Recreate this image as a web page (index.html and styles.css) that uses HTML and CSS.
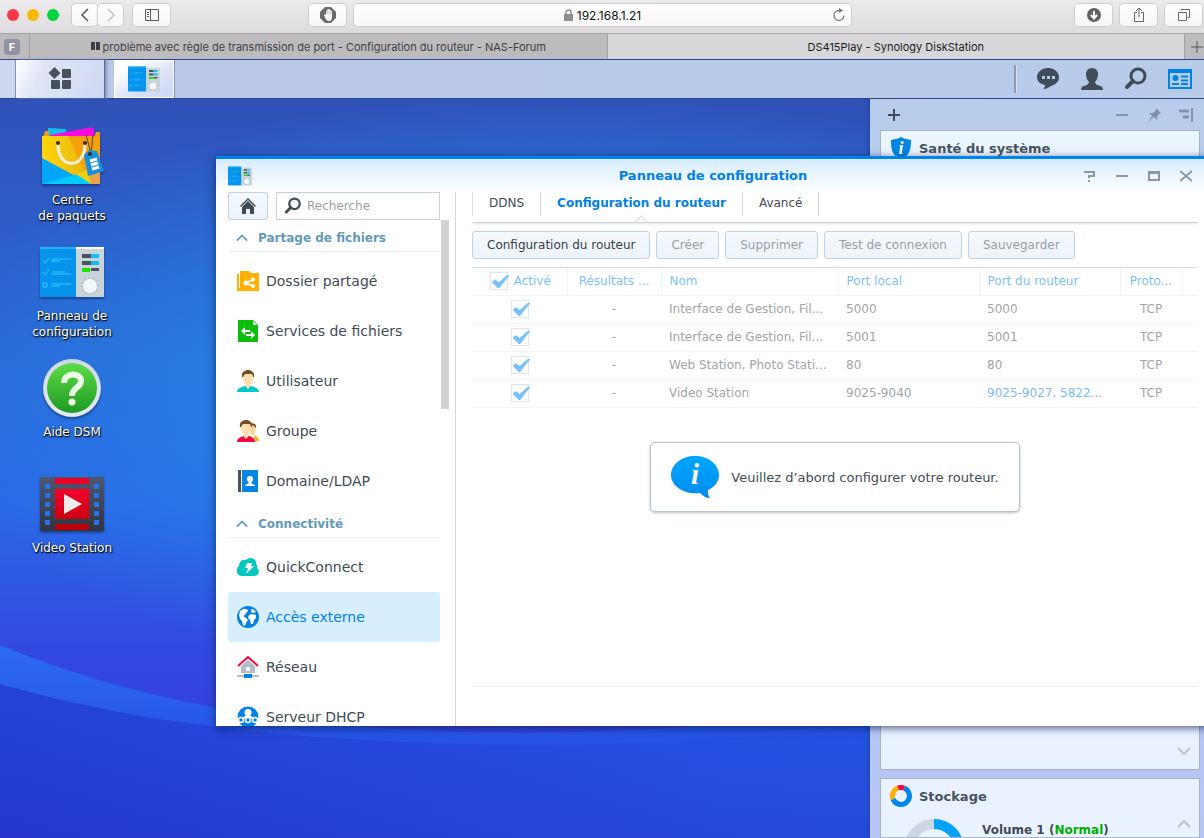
FILE: index.html
```
<!DOCTYPE html>
<html lang="fr">
<head>
	<meta charset="UTF-8">
	<title>DS415Play - Synology DiskStation</title>
<link rel="stylesheet" href="styles.css">
</head>
<body>
	<svg class="defs" width="0" height="0" aria-hidden="true">
		<defs>
			<linearGradient id="gGreen" x1="0" y1="0" x2="0" y2="1"><stop offset="0" stop-color="#5fdc46"/><stop offset="1" stop-color="#1c9a22"/></linearGradient>
			<linearGradient id="gRing" x1="0" y1="0" x2="0" y2="1"><stop offset="0" stop-color="#cdd8ea"/><stop offset="1" stop-color="#e6ebf3"/></linearGradient>
			<linearGradient id="gBag" x1="0" y1="0" x2="1" y2="0"><stop offset="0" stop-color="#ffd60a"/><stop offset="1" stop-color="#e2ad10"/></linearGradient>
			<linearGradient id="gFilm" x1="0" y1="0" x2="0" y2="1"><stop offset="0" stop-color="#4f5770"/><stop offset="1" stop-color="#2e343f"/></linearGradient>
			<linearGradient id="gRed" x1="0" y1="0" x2="0" y2="1"><stop offset="0" stop-color="#f5002c"/><stop offset="1" stop-color="#cc0010"/></linearGradient>
			<linearGradient id="gInfo" x1="0" y1="0" x2="0" y2="1"><stop offset="0" stop-color="#00a6ff"/><stop offset="1" stop-color="#008cf2"/></linearGradient>
			<linearGradient id="gSwirl" x1="0" y1="0" x2="0" y2="1"><stop offset="0" stop-color="#2c6cf0"/><stop offset=".45" stop-color="#2755e6"/><stop offset="1" stop-color="#2a36cc"/></linearGradient>
			<linearGradient id="gWave" x1="0" y1="0" x2="1" y2="0"><stop offset="0" stop-color="#2236cc"/><stop offset=".6" stop-color="#2450e0"/><stop offset="1" stop-color="#2458e4"/></linearGradient>
		</defs>
		<symbol id="panel" viewBox="0 0 64 50">
			<path d="M0 0h36v50H0z" fill="#0593ec"/>
			<path d="M0 0h36v2H0z" fill="#23b3ff"/>
			<path d="M36 0h28v50H36z" fill="#c9d4da"/>
			<path d="M36 0h28v2H36z" fill="#fff"/>
			<path d="M3 13l2 3 4-5M3 25l2 3 4-5M3 36h4v4H3z" fill="none" stroke="#35c7ff" stroke-width="1"/>
			<path d="M12 12h19M11 14h9M12 25h13M11 27h20M12 37h19M11 39h9" stroke="#35c7ff" stroke-width="1"/>
			<path d="M42 7h9v4h-9zM42 14h9v4h-9zM51 21h8v3h-8z" fill="#4a535b"/>
			<path d="M51 7h8v4h-8zM51 14h8v4h-8z" fill="#12bdf8"/>
			<path d="M42 21h8v4h-8z" fill="#1fe000"/>
			<circle cx="50" cy="39" r="8" fill="none" stroke="#a4b0b8" stroke-width="2" stroke-dasharray="1 3"/>
			<circle cx="50" cy="39" r="7" fill="#f1f8fb"/>
		</symbol>
		<symbol id="lens" viewBox="0 0 24 24">
			<circle cx="14" cy="9" r="7" fill="none" stroke="currentColor" stroke-width="3"/>
			<path d="M9 14l-6 6" stroke="currentColor" stroke-width="4" stroke-linecap="round"/>
		</symbol>
		<symbol id="up" viewBox="0 0 14 8"><path d="M1 7l6-6 6 6" fill="none" stroke="currentColor" stroke-width="2"/></symbol>
		<symbol id="down" viewBox="0 0 14 8"><path d="M1 1l6 6 6-6" fill="none" stroke="currentColor" stroke-width="2"/></symbol>
	</svg>

	<header class="safari">
		<div class="toolbar">
			<div class="lights"><i class="red"></i><i class="yellow"></i><i class="green"></i></div>
			<div class="nav">
				<button class="tb small" aria-label="Précédent"><svg width="12" height="14"><path d="M9 1L3 7l6 6" fill="none" stroke="#555" stroke-width="1.500"/></svg></button>
				<button class="tb small" aria-label="Suivant"><svg width="12" height="14"><path d="M3 1l6 6-6 6" fill="none" stroke="#c2c2c2" stroke-width="1.500"/></svg></button>
			</div>
			<button class="tb" aria-label="Barre latérale"><svg width="16" height="14"><path d="M1.500 1.500h13v11h-13zM6.500 1.500v11M3 4.500h2M3 6.500h2M3 8.500h2" fill="none" stroke="#5a5a5a"/></svg></button>
			<button class="tb block" aria-label="Bloqueur"><svg width="16" height="16"><path d="M5 0h6l5 5v6l-5 5H5l-5-5V5z" fill="#6a6a6a"/><path d="M4 8l1-1 1 1V4h1V2.500h1.500V2H10v1h1v1h1v6c0 2-1 4-3 4-2.500 0-4-3-5-6z" fill="#f5f5f5"/><path d="M7.500 4v3M9 4v3M10.500 4v3" stroke="#aaa" stroke-width=".5"/></svg></button>
			<div class="address">
				<svg width="9" height="12"><path d="M0 5h9v7H0z" fill="#8e8e8e"/><path d="M2 6V3.500a2.500 2.500 0 0 1 5 0V6" fill="none" stroke="#8e8e8e" stroke-width="1.500"/></svg>
				<span>192.168.1.21</span>
				<button class="reload" aria-label="Actualiser"><svg width="14" height="14"><path d="M8 2.500a5 5 0 1 0 4 5" fill="none" stroke="#777" stroke-width="1.200"/><path d="M7 0l4 2.500L7 5z" fill="#777"/></svg></button>
			</div>
			<div class="tools">
				<button class="tb" aria-label="Téléchargements"><svg width="14" height="14"><circle cx="7" cy="7" r="7" fill="#636363"/><path d="M7 3v7M4 7l3 3.500L10 7" fill="none" stroke="#fff" stroke-width="2"/></svg></button>
				<button class="tb" aria-label="Partager"><svg width="12" height="16"><path d="M4 5.500H1.500v9h9v-9H8M6 10V1.500M3 4l3-3 3 3" fill="none" stroke="#666"/></svg></button>
				<button class="tb" aria-label="Onglets"><svg width="14" height="14"><path d="M1.500 4.500h8v8h-8zM4 2.500V1.500h8.500v8h-2" fill="none" stroke="#666"/></svg></button>
			</div>
		</div>
		<nav class="tabs">
			<a class="pinned" href="#"><b>F</b></a>
			<a class="tab" href="#"><svg width="9" height="9"><path d="M0 0h4v8H0zM5 0h4v8H5z" fill="#3f3f43"/></svg>problème avec règle de transmission de port - Configuration du routeur - NAS-Forum</a>
			<a class="tab current" href="#">DS415Play - Synology DiskStation</a>
			<button class="newtab" aria-label="Nouvel onglet"><svg width="12" height="12"><path d="M6 0v12M0 6h12" stroke="#555"/></svg></button>
		</nav>
	</header>

	<div class="taskbar">
		<button class="mainmenu" aria-label="Menu principal"><svg width="24" height="24" fill="#46525c"><path d="M6.500 0l6 6-6 6-6-6z"/><rect x="14" y="2" width="9" height="9" rx="1"/><rect x="3" y="13" width="9" height="9" rx="1"/><rect x="14" y="13" width="9" height="9" rx="1"/></svg></button>
		<button class="running" aria-label="Panneau de configuration"><svg width="32" height="26"><use href="#panel"/></svg></button>
		<div class="tray">
			<button aria-label="Notifications"><svg width="24" height="24"><path d="M12 1c6 0 11 4 11 9s-4 8-8 9c-2 1-4 3-8 3 1-1 2-2 2-4-5-1-8-4-8-8 0-5 5-9 11-9z" fill="#414c59"/><path d="M6 9h3v3H6zM11 9h3v3h-3zM16 9h3v3h-3z" fill="#b9c8ea"/></svg></button>
			<button aria-label="Options"><svg width="24" height="24"><path d="M12 1c4 0 6 3 6 6s-1 6-3 8c0 2 2 3 5 4 2 0 3 2 3 4H1c0-2 1-4 3-4 3-1 5-2 5-4-2-2-3-5-3-8s2-6 6-6z" fill="#414c59"/></svg></button>
			<button aria-label="Rechercher"><svg width="24" height="24"><use href="#lens"/></svg></button>
			<button class="on" aria-label="Widgets"><svg width="24" height="20"><path d="M1 2h22v17H1z" fill="none" stroke="#0083e6" stroke-width="2"/><path d="M0 0h24v4H0z" fill="#0083e6"/><circle cx="7.500" cy="9" r="3" fill="#0083e6"/><path d="M4 15h7M13 7.500h7M13 11.500h7M13 15h7" stroke="#0083e6" stroke-width="2"/></svg></button>
		</div>
	</div>

	<main class="desktop">
		<svg class="wallpaper" viewBox="0 0 1204 740" preserveAspectRatio="none" aria-hidden="true">
			<path d="M0 547C120 596 260 628 470 634S900 610 1204 560V740H0z" fill="url(#gSwirl)"/>
			<path d="M0 586c150 42 300 56 480 60 250 6 520-30 724-60v154H0z" fill="url(#gWave)" opacity=".7"/>
		</svg>

		<ul class="icons">
			<li><a href="#"><span class="pic"><svg width="64" height="64" viewBox="0 0 64 64">
				<path d="M8 4l18 1 2 12H7z" fill="#14bdf0"/><path d="M5 7h4v6H3zM56 8h4v6h-6z" fill="#e0a11b"/><path d="M10 11l43-8 2 10H10z" fill="#f80ae0"/>
				<path d="M2 12h58v48H2z" fill="url(#gBag)"/><path d="M28 12h32v48h-10z" fill="#f5a00c"/><path d="M2 34l48 26H2z" fill="#02a6fa"/><path d="M50 59L38 50 2 60h48z" fill="#04ccff"/><path d="M36 50l12-5 3 15z" fill="#f0ce16"/><path d="M50 44h10v16h-9z" fill="#e8a34e"/>
				<path d="M18 20c0 26 27 26 27 0" fill="none" stroke="#fbeee2" stroke-width="3"/><circle cx="18" cy="19" r="2" fill="#402a10"/><circle cx="45" cy="19" r="2" fill="#402a10"/>
				<path d="M46 11l5 18 2-18" fill="none" stroke="#5b4310"/><path d="M44 31l5-5 8 1 7 20-16 5z" fill="#1592dd"/><path d="M50 37l7-2M51 41l7-2M52 45l7-2" stroke="#fff" stroke-width="3"/><circle cx="50" cy="30" r="2" fill="#39310f"/>
			</svg></span>Centre <br>de paquets</a></li>
			<li><a href="#"><span class="pic"><svg width="64" height="50"><use href="#panel"/></svg></span>Panneau de configuration</a></li>
			<li><a href="#"><span class="pic"><svg width="60" height="60"><circle cx="30" cy="30" r="29" fill="url(#gRing)"/><circle cx="30" cy="30" r="25" fill="url(#gGreen)"/><path d="M22 25c0-11 17-11 17-2 0 7-9 6-9 15" fill="none" stroke="#eaffe6" stroke-width="6"/><circle cx="30" cy="44" r="3.500" fill="#eaffe6"/></svg></span>Aide DSM</a></li>
			<li><a href="#"><span class="pic"><svg width="64" height="54"><rect width="64" height="54" rx="1" fill="url(#gFilm)"/><path d="M15 1h34v6H15z" fill="#e8002a"/><path d="M15 12h34v30H15z" fill="url(#gRed)"/><path d="M15 47h34v6H15z" fill="#b80008"/><path d="M24 17v20l18-10z" fill="#f0eaec"/><path d="M7.500 7v41M56.500 7v41" stroke="#2a72ea" stroke-width="5" stroke-dasharray="5 4"/></svg></span>Video Station</a></li>
		</ul>

		<aside class="widgets">
			<div class="widgetbar">
				<button aria-label="Ajouter"><svg width="12" height="12"><path d="M6 0v12M0 6h12" stroke="#414c59" stroke-width="2"/></svg></button>
				<span class="fill"></span>
				<button aria-label="Réduire"><svg width="14" height="14"><path d="M1 7h12" stroke="#8493ad" stroke-width="2"/></svg></button>
				<button aria-label="Épingler"><svg width="14" height="14"><path d="M9 0l5 5-2 1-2 3 0 3-3-3-6 5 4-6-3-3h4l3-3z" fill="#8493ad"/></svg></button>
				<button aria-label="Ancrer"><svg width="14" height="14"><path d="M0 3h10M4 9h6" stroke="#8493ad" stroke-width="3"/><path d="M13 0v14" stroke="#8493ad" stroke-width="2"/></svg></button>
			</div>
			<section class="widget health">
				<h3><svg width="22" height="24"><path d="M11 1c3 2 7 2 10 3 0 9-1 16-10 19C2 20 1 13 1 4c3-1 7-1 10-3z" fill="#0086e6"/><text class="info" x="11" y="18" text-anchor="middle" font-size="18">i</text></svg>Santé du système</h3>
				<svg class="arrow" width="14" height="8"><use href="#down"/></svg>
			</section>
			<section class="widget storage">
				<h3><svg width="22" height="22" fill="none" stroke-width="5"><path d="M14 3a8.500 8.500 0 1 1-11 11" stroke="#0086e6"/><path d="M3 14a8.500 8.500 0 0 1 5-11" stroke="#ffb000"/><path d="M8 3a9 9 0 0 1 6 0" stroke="#f8063f"/></svg>Stockage</h3>
				<div class="volume">
					<svg class="donut" width="60" height="60" fill="none" stroke-width="10"><circle cx="30" cy="30" r="25" stroke="#cdd7e1"/><path d="M30 5a25 25 0 0 1 0 50" stroke="#02a2fb"/></svg>
					<p>Volume 1 (<em>Normal</em>)</p>
					<svg class="arrow" width="14" height="8"><use href="#up"/></svg>
				</div>
			</section>
		</aside>

		<div class="window">
			<div class="titlebar">
				<svg class="appicon" width="24" height="20"><use href="#panel"/></svg>
				<h1>Panneau de configuration</h1>
				<div class="controls">
					<button aria-label="Aide"><svg width="12" height="12"><path d="M0 2h10v4H5v2M4 11h2" fill="none" stroke="#8c979f" stroke-width="2"/></svg></button>
					<button aria-label="Réduire"><svg width="12" height="12"><path d="M0 6h12" stroke="#8c979f" stroke-width="2"/></svg></button>
					<button aria-label="Agrandir"><svg width="12" height="12"><path d="M1 2h10v8H1z" fill="none" stroke="#8c979f" stroke-width="2"/><path d="M0 3h12" stroke="#8c979f" stroke-width="2"/></svg></button>
					<button aria-label="Fermer"><svg width="12" height="12"><path d="M0 1l12 10M12 1L0 11" stroke="#8c979f" stroke-width="2"/></svg></button>
				</div>
			</div>
			<div class="content">
				<div class="sidebar">
					<div class="find">
						<button class="btn home" aria-label="Accueil"><svg width="16" height="16"><path d="M0 8l8-8 8 8-1 1-7-7-7 7z" fill="#414c59"/><path d="M2 9l6-6 6 6v7h-4v-5H6v5H2z" fill="#414c59"/></svg></button>
						<label class="search"><svg width="18" height="18"><use href="#lens"/></svg><input type="text" placeholder="Recherche" aria-label="Recherche"></label>
					</div>
					<div class="list">
						<h2><svg width="12" height="8" viewBox="0 0 14 8"><use href="#up"/></svg>Partage de fichiers</h2>
						<ul>
							<li><a href="#"><svg width="22" height="22"><path d="M0 4h2v17H0zM3 1h9l1 2h9v18H3z" fill="#ffb000"/><path d="M0 18h5v3H0z" fill="#ffb000"/><circle cx="9" cy="13" r="2.500" fill="#fff"/><circle cx="16" cy="9.500" r="2" fill="#fff"/><circle cx="16" cy="16" r="2" fill="#fff"/><path d="M16 9.500L9 13l7 3" fill="none" stroke="#fff" stroke-width="1.500"/></svg>Dossier partagé</a></li>
							<li><a href="#"><svg width="22" height="22"><path d="M1 0h15l5 5v17H1z" fill="#0cbe0c"/><path d="M16 1v4h4z" fill="#fff"/><path d="M4 11l4-4v3h5v2H8v3zM18 15l-4-4v3H9v2h5v3z" fill="#fff"/></svg>Services de fichiers</a></li>
							<li><a href="#"><svg width="22" height="22"><path d="M0 22c0-4 5-5 8-6h6c3 1 8 2 8 6z" fill="#00c8c8"/><path d="M11 2c4 0 5 3 5 6s-2 6-3 7v2l-2 2-2-2v-2c-1-1-3-4-3-7s1-6 5-6z" fill="#ffdfb0"/><path d="M5 7c-1-5 3-7 6-7s7 2 6 7h-1l-1-3H8L6 7z" fill="#7a4a22"/></svg>Utilisateur</a></li>
							<li><a href="#"><svg width="22" height="22"><path d="M17 15c3 1 5 3 5 6h-4z" fill="#ffb000"/><path d="M14 5h5c0 5-1 7-2 10h-4z" fill="#ffd49a"/><path d="M13 4c3-2 7 0 6 4l-2-2z" fill="#7a4a22"/><path d="M0 22c0-4 4-5 7-6h5c3 1 6 2 6 6z" fill="#f8063f"/><path d="M9 2c4 0 5 3 5 6s-2 6-3 7v2l-2 2-2-2v-2c-1-1-3-4-3-7s1-6 5-6z" fill="#ffdfb0"/><path d="M3 7C2 2 6 0 9 0s7 2 6 7h-1l-1-3H6L4 7z" fill="#7a4a22"/></svg>Groupe</a></li>
							<li><a href="#"><svg width="22" height="22"><path d="M1 0h3v22H1z" fill="#46525c"/><path d="M5 0h16v22H5z" fill="#0086e6"/><path d="M13 6c2 0 3 1 3 3s-1 3-2 4c0 1 4 1 4 3H8c0-2 4-2 4-3-1-1-2-2-2-4s1-3 3-3z" fill="#fff"/></svg>Domaine/LDAP</a></li>
						</ul>
						<h2><svg width="12" height="8" viewBox="0 0 14 8"><use href="#up"/></svg>Connectivité</h2>
						<ul>
							<li><a href="#"><svg width="22" height="22"><path d="M5 20c-7 0-6-9-3-10 0-5 4-7 7-6 3-4 11-2 10 4 1 1 2 2 1 4 4 3 1 8-3 8z" fill="#00c8c0"/><path d="M10 7h5l-1 3h3l-8 8 2-6H8z" fill="#fff"/></svg>QuickConnect</a></li>
							<li class="selected"><a href="#"><svg width="22" height="22"><circle cx="11" cy="11" r="11" fill="#0083e6"/><path d="M3 5l3-2 4 0 1 2-2 2-1 2-2 1 3 2 2 2-2 3-1 3-2-1-1-4-2-2-1-4z" fill="#fff"/><path d="M12 9l3-1 4 1 0 3-2 2-1 4-2 0-1-4-2-2zM14 4l2-1 3 3-3 1-2-1z" fill="#fff"/></svg>Accès externe</a></li>
							<li><a href="#"><svg width="22" height="22"><path d="M1 10l10-9 10 9" fill="none" stroke="#f8063f" stroke-width="2"/><path d="M4 10l7-6 7 6v7H4z" fill="#b1bcc7"/><path d="M9 11h4v4H9z" fill="#fff"/><path d="M0 20h22" stroke="#b1bcc7" stroke-width="2"/><path d="M7 18h8v4H7z" fill="#0083e6"/></svg>Réseau</a></li>
							<li><a href="#"><svg width="22" height="22"><circle cx="11" cy="11" r="10.500" fill="#0083e6"/><circle cx="11" cy="6.500" r="3.500" fill="#fff"/><path d="M11 8v5M11 9l-6 4M11 9l6 4" stroke="#fff" stroke-width="2"/><g fill="#0083e6" stroke="#fff" stroke-width="1.500"><circle cx="4" cy="14" r="2.500"/><circle cx="11" cy="14" r="2.500"/><circle cx="18" cy="14" r="2.500"/></g></svg>Serveur DHCP</a></li>
						</ul>
					</div>
				</div>
				<div class="scroll"><i></i></div>
				<div class="main">
					<nav class="subtabs">
						<a href="#">DDNS</a>
						<a class="active" href="#">Configuration du routeur</a>
						<a href="#">Avancé</a>
					</nav>
					<div class="actions">
						<button class="btn">Configuration du routeur</button>
						<button class="btn" disabled>Créer</button>
						<button class="btn" disabled>Supprimer</button>
						<button class="btn" disabled>Test de connexion</button>
						<button class="btn" disabled>Sauvegarder</button>
					</div>
					<div class="grid">
						<table>
							<colgroup><col class="c1"><col class="c2"><col class="c3"><col class="c4"><col class="c4"><col class="c5"><col></colgroup>
							<thead>
								<tr><th class="mid"><label><input type="checkbox" checked>Activé</label></th><th class="mid">Résultats ...</th><th>Nom</th><th>Port local</th><th>Port du routeur</th><th class="mid">Proto...</th><th></th></tr>
							</thead>
							<tbody>
								<tr><td class="mid"><input type="checkbox" checked aria-label="Activé"></td><td class="mid">-</td><td>Interface de Gestion, Fil...</td><td>5000</td><td>5000</td><td class="mid">TCP</td><td></td></tr>
								<tr><td class="mid"><input type="checkbox" checked aria-label="Activé"></td><td class="mid">-</td><td>Interface de Gestion, Fil...</td><td>5001</td><td>5001</td><td class="mid">TCP</td><td></td></tr>
								<tr><td class="mid"><input type="checkbox" checked aria-label="Activé"></td><td class="mid">-</td><td>Web Station, Photo Stati...</td><td>80</td><td>80</td><td class="mid">TCP</td><td></td></tr>
								<tr><td class="mid"><input type="checkbox" checked aria-label="Activé"></td><td class="mid">-</td><td>Video Station</td><td>9025-9040</td><td><a href="#">9025-9027, 5822</a>...</td><td class="mid">TCP</td><td></td></tr>
							</tbody>
						</table>
						<div class="mask">
							<div class="message">
								<svg width="48" height="42"><path d="M24 0c13 0 24 8 24 19 0 6-4 12-11 15 0 3 0 6 2 8-4 0-7-2-10-5C13 39 0 30 0 19 0 8 11 0 24 0z" fill="url(#gInfo)"/><text class="info" x="24" y="28" text-anchor="middle" font-size="29">i</text></svg>
								<p>Veuillez d’abord configurer votre routeur.</p>
							</div>
						</div>
					</div>
				</div>
			</div>
		</div>
	</main>
</body>
</html>
```
FILE: styles.css
```
*{margin: 0;padding: 0;box-sizing: border-box;}
body{height: 100vh;display: flex;flex-direction: column;overflow: hidden;font-family: Verdana, "DejaVu Sans", sans-serif;font-size: 12px;color: #414b55;background: #2d5fe0;}
ul{list-style: none;}
a{color: inherit;text-decoration: none;}
button{border: none;background: none;font: inherit;color: inherit;}
svg{display: block;flex: none;}
.defs{position: absolute;}
.info{fill: #fff;font-family: "Liberation Serif", serif;font-weight: bold;font-style: italic;}

/* safari */
.safari{font-family: Inter, sans-serif;color: #111;}
.toolbar{height: 33px;padding: 4px 2px 7px 7px;display: flex;background: linear-gradient(#edebed, #dddbdd);}
.lights{display: flex;gap: 8px;padding-top: 5px;width: 65px;}
.lights i{width: 12px;height: 12px;border-radius: 50%;}
.red{background: #fc3846;}
.yellow{background: #fdb900;}
.green{background: #02d43f;}
.nav{display: flex;gap: 1px;margin-right: 10px;}
.tb{width: 37px;height: 22px;display: flex;align-items: center;justify-content: center;border-radius: 4px;background: linear-gradient(#fff, #f6f6f6);box-shadow: 0 0 1px 1px #cfcdcf;}
.small{width: 25px;}
.block{margin-left: 139px;}
.address{flex: 1;margin-left: 8px;height: 22px;display: flex;align-items: center;justify-content: center;gap: 4px;position: relative;border-radius: 4px;background: linear-gradient(#fff, #f7f7f7);box-shadow: 0 0 1px 1px #cfcdcf;font-size: 12px;}
.reload{position: absolute;right: 5px;top: 4px;}
.tools{display: flex;gap: 8px;margin-left: 224px;}
.tabs{height: 26px;display: flex;border-top: 1px solid #a5a3a6;background: #bdbbbe;font-size: 11px;}
.pinned{width: 30px;padding-left: 4px;display: flex;align-items: center;border-right: 1px solid #a3a1a4;}
.pinned b{width: 16px;height: 16px;line-height: 16px;border-radius: 4px;text-align: center;background: #9192a3;color: #fff;}
.tab{flex: 1;display: flex;align-items: center;justify-content: center;gap: 3px;border-right: 1px solid #a3a1a4;color: #3f3f43;}
.current{background: #d8d6d8;color: #1c1c1e;}
.newtab{width: 19px;padding-left: 6px;}

/* taskbar */
.taskbar{height: 40px;flex: none;display: flex;border-top: 1px solid #27468c;border-bottom: 1px solid #27468c;background: linear-gradient(90deg, #bac7ea, #b8cbe9);}
.mainmenu{width: 90px;margin: 0 9px 0 15px;border-left: 1px solid #8594b2;border-right: 1px solid #5b6786;background: linear-gradient(115deg, #fff, #dfe4f6 30%, #cfd8f3);box-shadow: 2px 0 3px #8592b8, -15px 0 #cdd7f0;display: flex;align-items: center;justify-content: center;}
.running{width: 61px;border-right: 1px solid #8594b2;background: linear-gradient(150deg, #fff 20%, #dbe2f7 60%, #cdd6f3);box-shadow: inset 0 0 0 1px #fff;display: flex;align-items: center;justify-content: center;}
.tray{display: flex;margin-left: auto;padding-right: 2px;align-items: center;color: #414c59;}
.tray::before{content: "";height: 28px;width: 2px;background: #8c9ab5;border-right: 1px solid #d5dff2;margin-right: 9px;}
.tray button{width: 44px;height: 38px;display: flex;align-items: center;justify-content: center;}

/* desktop */
.desktop{flex: 1;position: relative;overflow: hidden;display: flex;justify-content: space-between;background: radial-gradient(ellipse 640px 300px at 560px 290px, #2090ea, rgba(32,130,232,0)), linear-gradient(#3051b8 0, #2b68d8 35%, #2b68e6 55%, #3348e0 75%, #3538da);}
.wallpaper{position: absolute;top: 0;left: 0;width: 100%;height: 100%;}
.icons{position: relative;width: 120px;margin-left: 12px;padding-top: 25px;}
.icons li{height: 116px;}
.icons a{display: block;line-height: 16px;text-align: center;color: #fff;text-shadow: 1px 1px 1px #000, 0 1px 2px #123;}
.pic{height: 64px;margin-bottom: 4px;display: flex;align-items: center;justify-content: center;filter: drop-shadow(0 2px 1px rgba(10,30,80,.5));}

/* widgets */
.widgets{position: relative;width: 334px;padding: 0 4px 0 10px;display: flex;flex-direction: column;background: linear-gradient(#b8cdeb, #b7c6f6);box-shadow: 0 0 5px #1c3f90;}
.widgetbar{height: 31px;padding: 0 7px 0 8px;display: flex;align-items: center;gap: 18px;}
.fill{flex: 1;}
.widget{border: 1px solid #a9b5c6;padding: 6px 8px 0 9px;}
.widget h3{display: flex;align-items: center;gap: 7px;height: 22px;font-size: 13px;color: #46525e;}
.health{flex: 1;margin-bottom: 8px;display: flex;flex-direction: column;justify-content: space-between;align-items: stretch;background: linear-gradient(#eaf5fd, #ebf2ff);}
.health .arrow{align-self: flex-end;margin-bottom: 14px;}
.arrow{color: #bac2cf;}
.storage{height: 60px;overflow: hidden;background: #ebf2ff;}
.volume{display: flex;padding: 12px 0 0 14px;font-weight: bold;line-height: 22px;}
.volume p{flex: 1;margin-left: 18px;}
.volume em{font-style: normal;color: #00ae00;}
.volume .arrow{margin-top: 1px;}

/* window */
.window{position: absolute;top: 57px;left: 216px;right: -4px;bottom: 112px;display: flex;flex-direction: column;border-top: 3px solid #0083ea;background: #fff;box-shadow: 0 2px 8px rgba(10,25,80,.7);}
.titlebar{height: 33px;padding: 0 16px 0 12px;display: flex;align-items: center;justify-content: space-between;background: linear-gradient(#d6ecfc, #fff);}
.titlebar h1{flex: 1;text-align: center;font-size: 13px;color: #0080ea;padding-left: 90px;}
.controls{display: flex;gap: 20px;}
.content{flex: 1;min-height: 0;display: flex;padding-left: 12px;}
.sidebar{width: 212px;display: flex;flex-direction: column;overflow: hidden;}
.find{display: flex;gap: 8px;flex: none;}
.btn{height: 28px;padding: 0 14px;border: 1px solid #c3d0dd;border-radius: 3px;background: linear-gradient(#f5f9fd, #edf3fa);color: #35404a;}
.btn:disabled{color: #96a0aa;}
.home{width: 40px;padding: 0 11px;}
.search{flex: 1;display: flex;align-items: center;gap: 5px;height: 28px;padding: 0 7px;border: 1px solid #c3d0dd;color: #414c59;}
.search input{width: 110px;border: none;outline: none;font: inherit;color: #414b55;}
.search input::placeholder{color: #98a2ac;}
.list h2{height: 32px;padding: 4px 0 0 8px;display: flex;align-items: center;gap: 10px;border-bottom: 1px solid #e6edf3;margin-bottom: 4px;font-size: 12px;color: #6499b8;}
.list a{height: 50px;padding-left: 9px;display: flex;align-items: center;gap: 7px;font-size: 14px;}
.list .selected a{background: #d6eefe;border-radius: 3px;color: #0080ea;}
.scroll{width: 16px;padding: 28px 0 0 1px;border-right: 1px solid #d4d7da;}
.scroll i{display: block;width: 8px;height: 189px;background: #d0d2d4;}

.main{flex: 1;min-width: 0;display: flex;flex-direction: column;padding: 0 10px 39px 16px;}
.subtabs{display: flex;height: 31px;padding-bottom: 6px;border-bottom: 1px solid #d0d4d8;box-shadow: 0 2px 2px -1px #e2e4e6;flex: none;}
.subtabs a{position: relative;padding: 0 16px;line-height: 22px;border-right: 1px solid #d4dfe8;}
.subtabs a:first-child{border-left: 1px solid #d4dfe8;}
.subtabs .active{color: #0080ea;font-weight: bold;}
.active::after{content: "";position: absolute;left: 50%;bottom: -11px;width: 9px;height: 9px;margin-left: -5px;background: #fff;border: solid #d0d4d8;border-width: 1px 0 0 1px;transform: rotate(45deg);clip-path: polygon(0 0, 100% 0, 0 100%);}
.actions{display: flex;gap: 6px;margin: 8px 0;position: relative;}
.grid{flex: 1;position: relative;border-top: 1px solid #d4dfe8;border-bottom: 1px solid #e6edf3;}
table{width: 100%;table-layout: fixed;border-collapse: collapse;color: #a0a5aa;}
.c1{width: 95px;}
.c2{width: 94px;}
.c3{width: 177px;}
.c4{width: 141px;}
.c5{width: 62px;}
th, td{height: 28px;padding: 0 0 0 8px;text-align: left;font-weight: normal;white-space: nowrap;border-bottom: 1px solid #f2f5f8;}
th{height: 27px;color: #80bff4;border-right: 1px solid #f0f4f8;}
th:last-child{border-right: none;}
td a{color: #7cbcf4;}
.mid{padding: 0;text-align: center;}
th label{display: flex;align-items: center;justify-content: center;gap: 6px;padding-left: 2px;}
input[type=checkbox]{appearance: none;display: inline-block;vertical-align: middle;position: relative;width: 18px;height: 18px;border: 1px solid #dfe5ec;background: #fff;}
input:checked::after{content: "";position: absolute;left: 1px;top: 1px;width: 18px;height: 14px;background: #78c1fa;clip-path: polygon(0 54%, 20% 38%, 40% 58%, 84% 8%, 100% 6%, 42% 100%, 34% 100%);}
.mask{position: absolute;top: 0;right: 0;bottom: 0;left: 0;display: flex;align-items: center;justify-content: center;}
.message{height: 70px;padding: 0 20px;display: flex;align-items: center;gap: 12px;background: #fff;border: 1px solid #b6c4d1;border-radius: 5px;box-shadow: 0 1px 3px #b9c0c7;font-size: 13px;}
```
